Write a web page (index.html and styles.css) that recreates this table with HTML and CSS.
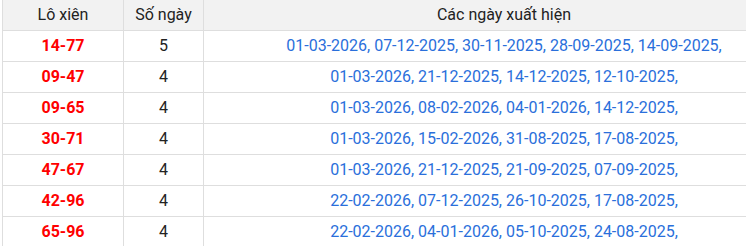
FILE: index.html
```html
<!DOCTYPE html>
<html lang="vi">
<head>
<meta charset="utf-8">
<link rel="stylesheet" href="styles.css">
</head>
<body>
<table class="lx">
  <thead>
    <tr><th class="c1">Lô xiên</th><th class="c2">Số ngày</th><th class="c3">Các ngày xuất hiện</th></tr>
  </thead>
  <tbody>
    <tr><td class="pair">14-77</td><td class="cnt">5</td><td class="dates">01-03-2026, 07-12-2025, 30-11-2025, 28-09-2025, 14-09-2025,</td></tr>
    <tr><td class="pair">09-47</td><td class="cnt">4</td><td class="dates">01-03-2026, 21-12-2025, 14-12-2025, 12-10-2025,</td></tr>
    <tr><td class="pair">09-65</td><td class="cnt">4</td><td class="dates">01-03-2026, 08-02-2026, 04-01-2026, 14-12-2025,</td></tr>
    <tr><td class="pair">30-71</td><td class="cnt">4</td><td class="dates">01-03-2026, 15-02-2026, 31-08-2025, 17-08-2025,</td></tr>
    <tr><td class="pair">47-67</td><td class="cnt">4</td><td class="dates">01-03-2026, 21-12-2025, 21-09-2025, 07-09-2025,</td></tr>
    <tr><td class="pair">42-96</td><td class="cnt">4</td><td class="dates">22-02-2026, 07-12-2025, 26-10-2025, 17-08-2025,</td></tr>
    <tr><td class="pair">65-96</td><td class="cnt">4</td><td class="dates">22-02-2026, 04-01-2026, 05-10-2025, 24-08-2025,</td></tr>
  </tbody>
</table>
</body>
</html>
```
FILE: styles.css
```css
html, body {
  margin: 0;
  padding: 0;
  background: #fff;
  overflow: hidden;
}
body {
  font-family: Roboto, "Liberation Sans", sans-serif;
  font-size: 16px;
  color: #222;
}
.lx {
  border-collapse: collapse;
  margin-left: 2px;
  width: 803px;
  table-layout: fixed;
}
.lx th, .lx td {
  border: 1px solid #dedede;
  height: 31px;
  padding: 0;
  text-align: center;
  vertical-align: middle;
  box-sizing: border-box;
}
.lx th {
  border-top: 0;
  background: #f2f2f2;
  font-weight: 400;
  color: #222;
  height: 30px;
}
.c1 { width: 121px; }
.c2 { width: 80px; }
.pair {
  color: #ff0000;
  font-weight: 700;
}
.cnt { color: #222; }
.dates { color: #2a6fdb; }
```
